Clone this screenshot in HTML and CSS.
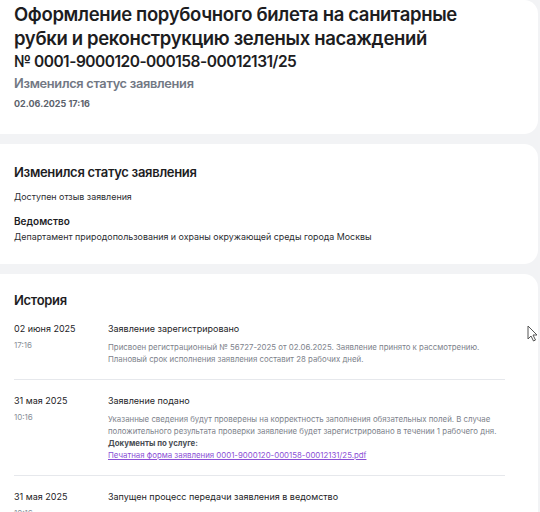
FILE: index.html
```html
<!DOCTYPE html>
<html lang="ru">
<head>
<meta charset="utf-8">
<link rel="stylesheet" href="styles.css">
</head>
<body>
<div class="page">
  <section class="card head">
    <h1 class="title">Оформление порубочного билета на санитарные рубки и реконструкцию зеленых насаждений</h1>
    <div class="number">№ 0001-9000120-000158-00012131/25</div>
    <div class="status">Изменился статус заявления</div>
    <div class="stamp">02.06.2025 17:16</div>
  </section>

  <section class="card info">
    <h2 class="h2">Изменился статус заявления</h2>
    <p class="text">Доступен отзыв заявления</p>
    <div class="label">Ведомство</div>
    <p class="text">Департамент природопользования и охраны окружающей среды города Москвы</p>
  </section>

  <section class="card history">
    <h2 class="h2">История</h2>
    <div class="row">
      <div class="when">
        <div class="date">02 июня 2025</div>
        <div class="time">17:16</div>
      </div>
      <div class="what">
        <div class="event">Заявление зарегистрировано</div>
        <p class="desc">Присвоен регистрационный № 56727-2025 от 02.06.2025. Заявление принято к рассмотрению. Плановый срок исполнения заявления составит 28 рабочих дней.</p>
      </div>
    </div>
    <div class="row">
      <div class="when">
        <div class="date">31 мая 2025</div>
        <div class="time">10:16</div>
      </div>
      <div class="what">
        <div class="event">Заявление подано</div>
        <p class="desc">Указанные сведения будут проверены на корректность заполнения обязательных полей. В случае положительного результата проверки заявление будет зарегистрировано в течении 1 рабочего дня.</p>
        <div class="docs">Документы по услуге:</div>
        <a class="link" href="#">Печатная форма заявления 0001-9000120-000158-00012131/25.pdf</a>
      </div>
    </div>
    <div class="row">
      <div class="when">
        <div class="date">31 мая 2025</div>
        <div class="time">10:16</div>
      </div>
      <div class="what">
        <div class="event">Запущен процесс передачи заявления в ведомство</div>
      </div>
    </div>
  </section>
</div>
<svg class="cursor" width="12" height="18" viewBox="0 0 12 18"><path d="M1 1 L1 14 L4 11 L6.5 16 L8.5 15 L6 10 L10 10 Z" fill="#fff" stroke="#555" stroke-width="1"/></svg>
</body>
</html>
```
FILE: styles.css
```css
html, body { margin: 0; padding: 0; }
body {
  background: #f2f3f5;
  font-family: Inter, "Noto Sans", sans-serif;
  color: #1d1d1f;
  overflow: hidden;
  height: 512px;
}
.page {
  display: flex;
  flex-direction: column;
  gap: 10px;
  width: 538px;
}
.card {
  background: #fff;
  border-radius: 0 14px 14px 0;
  padding: 0 14px;
}
.head { padding-top: 2px; padding-bottom: 24px; }
.title {
  margin: 0;
  max-width: 480px;
  font-size: 18.5px;
  line-height: 24px;
  font-weight: 600;
  letter-spacing: -0.35px;
}
.number {
  margin-top: 1px;
  font-size: 15.5px;
  line-height: 22px;
  font-weight: 600;
  letter-spacing: -0.5px;
}
.status {
  margin-top: 2px;
  font-size: 12.8px;
  line-height: 18px;
  font-weight: 600;
  letter-spacing: -0.3px;
  color: #727884;
}
.stamp {
  margin-top: 5px;
  font-size: 9px;
  line-height: 12px;
  font-weight: 700;
  color: #5c626c;
}
.info { padding-top: 18px; padding-bottom: 21px; }
.h2 {
  margin: 0;
  font-size: 13px;
  line-height: 20px;
  font-weight: 600;
  letter-spacing: -0.3px;
}
.text {
  margin: 0;
  font-size: 8.9px;
  line-height: 13px;
  color: #2b2d31;
}
.info .h2 + .text { margin-top: 8px; }
.label {
  margin-top: 11px;
  margin-bottom: 2px;
  font-size: 10px;
  line-height: 14px;
  font-weight: 600;
}
.history { padding-top: 16px; padding-bottom: 40px; }
.history .h2 { margin-bottom: 3px; }
.row {
  display: flex;
  margin-right: 19px;
  padding: 9px 0 14px;
  border-bottom: 1px solid #e6e8ec;
}
.row + .row { padding-top: 14px; }
.when { width: 94px; flex: none; }
.date {
  font-size: 9px;
  line-height: 14px;
  color: #1d1d1f;
}
.time {
  margin-top: 3px;
  font-size: 8px;
  line-height: 12px;
  color: #8a8f98;
}
.what { flex: 1; }
.event {
  font-size: 9px;
  line-height: 14px;
  color: #1d1d1f;
}
.desc {
  margin: 5px 0 0;
  font-size: 7.85px;
  line-height: 12px;
  color: #7d828b;
}
.docs {
  font-size: 7.85px;
  line-height: 12px;
  font-weight: 700;
  color: #4a4e55;
}
.link {
  display: block;
  width: max-content;
  font-size: 7.85px;
  line-height: 12px;
  color: #8b4fd6;
  text-decoration: underline;
}
.cursor {
  position: absolute;
  left: 527px;
  top: 325px;
}
```
